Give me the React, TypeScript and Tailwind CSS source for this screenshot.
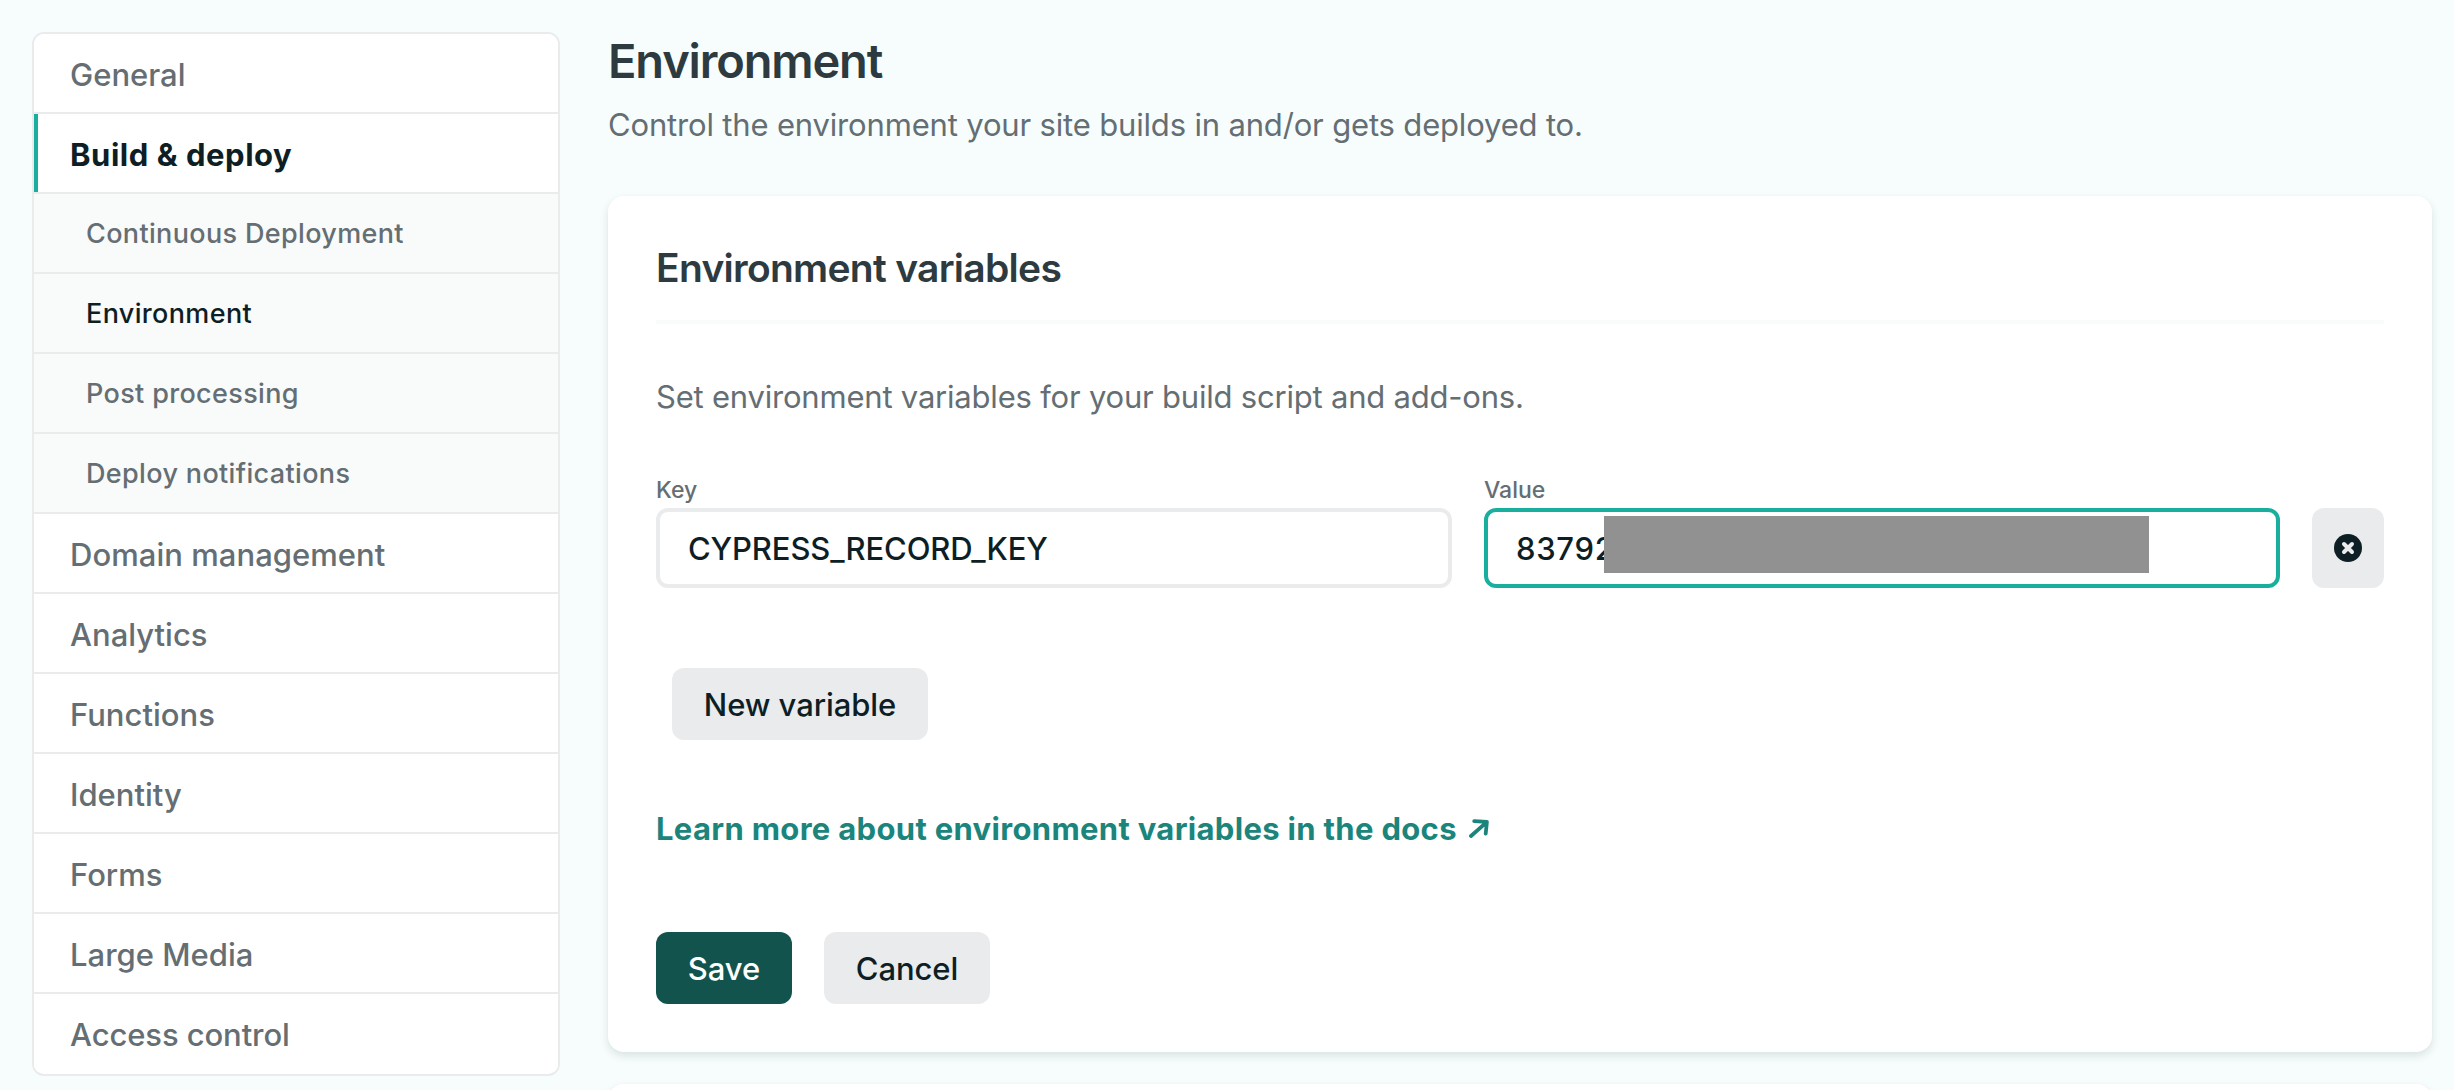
import React from 'react';

type NavItem = { label: string; kind?: 'active' | 'sub' | 'subActive'; tracking?: string };

const navItems: NavItem[] = [
  { label: 'General' },
  { label: 'Build & deploy', kind: 'active' },
  { label: 'Continuous Deployment', kind: 'sub' },
  { label: 'Environment', kind: 'subActive' },
  { label: 'Post processing', kind: 'sub' },
  { label: 'Deploy notifications', kind: 'sub' },
  { label: 'Domain management', tracking: 'tracking-[0.04px]' },
  { label: 'Analytics' },
  { label: 'Functions' },
  { label: 'Identity' },
  { label: 'Forms' },
  { label: 'Large Media' },
  { label: 'Access control', tracking: 'tracking-[-0.1px]' },
];

const kindClass = {
  top: 'bg-white pl-9 pt-1 text-[31px] font-medium text-[#646e73]',
  active:
    'bg-white border-l-4 border-l-[#1aae9f] pl-8 pt-1 text-[31px] font-bold tracking-[0.54px] text-[#0e1e25]',
  sub: 'bg-[#f9fafa] pl-[52px] pt-0.5 text-[27px] font-medium tracking-[0.35px] text-[#646e73]',
  subActive: 'bg-[#f9fafa] pl-[52px] pt-0.5 text-[27px] font-medium tracking-[0.35px] text-[#0e1e25]',
};

function Sidebar() {
  return (
    <nav className="w-[528px] shrink-0 self-start overflow-hidden rounded-xl border-2 border-[#e9ebed] bg-white">
      {navItems.map((item, i) => (
        <div key={item.label} className={i < navItems.length - 1 ? 'border-b-2 border-[#e9ebed]' : 'pb-0.5'}>
          <a className={`flex h-[78px] items-center ${kindClass[item.kind ?? 'top']} ${item.tracking ?? ''}`}>
            {item.label}
          </a>
        </div>
      ))}
    </nav>
  );
}

function Button({ primary, className = '', children }: { primary?: boolean; className?: string; children: React.ReactNode }) {
  return (
    <button
      className={`flex h-[72px] items-center justify-center rounded-xl pt-0.5 text-[31px] font-medium tracking-[-0.08px] ${
        primary ? 'bg-[#12544d] text-white' : 'bg-[#e9ebed] text-[#0e1e25]'
      } ${className}`}
    >
      {children}
    </button>
  );
}

function Field({ label, focused, children }: { label: string; focused?: boolean; children: React.ReactNode }) {
  return (
    <div className="w-[796px]">
      <div className="text-[23px] font-medium leading-8 text-[#646e73]">{label}</div>
      <div
        className={`relative mt-0.5 flex h-20 items-center rounded-xl border-4 bg-white pl-7 pt-0.5 text-[31px] font-medium tracking-[-0.12px] text-[#0e1e25] ${
          focused ? 'border-[#1aae9f]' : 'border-[#e9ebed]'
        }`}
      >
        {children}
      </div>
    </div>
  );
}

export default function App() {
  return (
    <div className="flex h-[1090px] w-[2454px] gap-12 overflow-hidden bg-[#f7fdfd] pl-8 pt-8 font-['Inter',sans-serif]">
      <Sidebar />
      <main className="w-[1824px]">
        <h1 className="mt-px text-[47px] font-semibold leading-[56px] tracking-[-1.15px] text-[#2d3b41]">
          Environment
        </h1>
        <p className="mt-3 text-[31px] leading-[48px] tracking-[-0.167px] text-[#646e73]">
          Control the environment your site builds in and/or gets deployed to.
        </p>

        <section className="mt-[47px] rounded-2xl bg-white p-12 shadow-[0_4px_8px_rgba(14,30,37,0.12)]">
          <h2 className="border-b-4 border-[#f9fafa] pb-7 text-[39px] font-semibold leading-[48px] tracking-[-0.72px] text-[#2d3b41]">
            Environment variables
          </h2>
          <p className="mt-[49px] text-[31px] leading-[48px] tracking-[-0.206px] text-[#646e73]">
            Set environment variables for your build script and add-ons.
          </p>

          <div className="mt-[53px] flex items-end gap-8">
            <Field label="Key">CYPRESS_RECORD_KEY</Field>
            <Field label="Value" focused>
              <span className="tracking-[0.7px]">83792</span>
              <span className="absolute left-[116px] top-1 h-[57px] w-[545px] bg-[#919191]" />
            </Field>
            <button className="flex h-20 w-[72px] items-center justify-center rounded-xl bg-[#e9ebed]">
              <svg width="28" height="28" viewBox="0 0 28 28" aria-label="Delete variable">
                <circle cx="14" cy="14" r="14" fill="#0e1e25" />
                <path d="M10 10l8 8M18 10l-8 8" stroke="#e9ebed" strokeWidth="4" strokeLinecap="round" />
              </svg>
            </button>
          </div>

          <Button className="ml-4 mt-20 w-64">New variable</Button>

          <a className="mt-[65px] flex items-center text-[31px] font-bold leading-[48px] tracking-[0.32px] text-[#1b857c]">
            Learn more about environment variables in the docs
            <svg className="ml-3" width="20" height="20" viewBox="0 0 20 20" fill="none">
              <path
                d="M5.2 2.1L17.9 2.9L16.7 14.6M17.7 3.1L2 17"
                stroke="currentColor"
                strokeWidth="3.8"
                strokeLinecap="round"
                strokeLinejoin="round"
              />
            </svg>
          </a>

          <div className="mt-[79px] flex gap-8">
            <Button primary className="w-[136px]">Save</Button>
            <Button className="w-[166px]">Cancel</Button>
          </div>
        </section>

        <section className="mt-8 h-24 rounded-2xl bg-white shadow-[0_4px_8px_rgba(14,30,37,0.12)]" />
      </main>
    </div>
  );
}
